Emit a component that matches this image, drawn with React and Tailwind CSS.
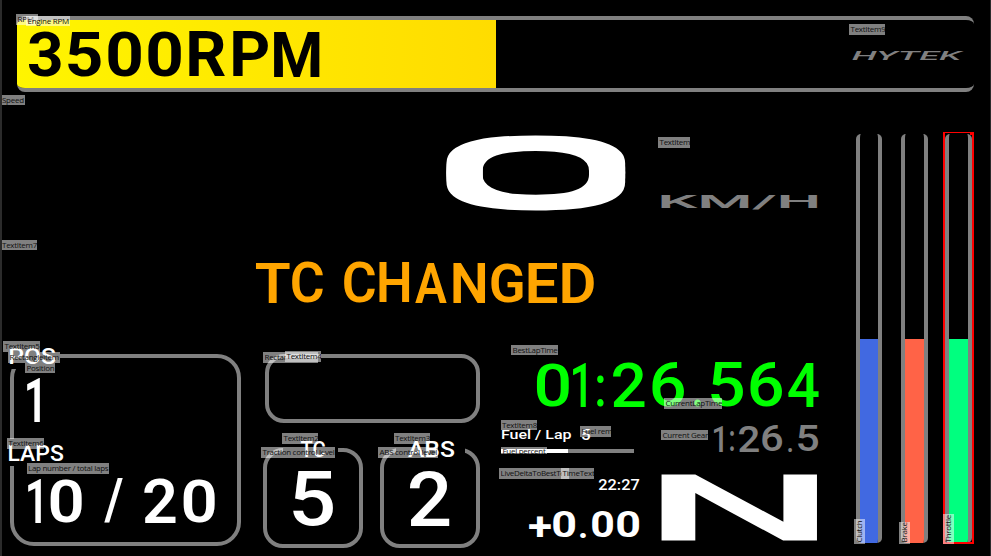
import React from "react";

const ctx = document.createElement("canvas").getContext("2d");

// Stretches one line of text so that its ink fills the box given by w and h.
// `thicken` adds weight to the horizontal strokes, in hundredths of an em.
function Fit({ children, w, h, weight = 500, italic = false, thicken = 0, className = "" }) {
  ctx.font = `${italic ? "italic " : ""}${weight} 100px Roboto, sans-serif`;
  const m = ctx.measureText(children);
  const left = m.actualBoundingBoxLeft;
  const inkW = left + m.actualBoundingBoxRight;
  const ascent = m.actualBoundingBoxAscent + thicken;
  const inkH = ascent + m.actualBoundingBoxDescent + thicken;
  const base = (m.fontBoundingBoxAscent - m.fontBoundingBoxDescent) / 2;
  return (
    <span className={`block shrink-0 ${className}`} style={{ width: w, height: h }}>
      <span
        className="block w-max origin-top-left whitespace-pre"
        style={{
          font: ctx.font,
          lineHeight: 0,
          textShadow: thicken ? `0 ${thicken}px currentColor, 0 -${thicken}px currentColor` : undefined,
          transform: `scale(${w / inkW}, ${h / inkH}) translate(${left}px, ${ascent - base}px)`,
        }}
      >
        {children}
      </span>
    </span>
  );
}

// A run of separately fitted glyphs: [text, width, gap before it, own height].
function Words({ parts, h, weight, className = "" }) {
  return (
    <div className={`flex items-end ${className}`}>
      {parts.map(([text, w, gap, height], i) => (
        <div key={i} className="shrink-0" style={{ marginLeft: gap }}>
          <Fit w={w} h={height || h} weight={weight}>{text}</Fit>
        </div>
      ))}
    </div>
  );
}

function Tag({ className, children }) {
  return (
    <span
      className={`absolute flex h-[10.5px] items-center overflow-hidden whitespace-nowrap bg-white/50 pl-[1.5px] font-['Open_Sans',sans-serif] text-[8px] leading-none tracking-[-0.28px] text-[#101010] ${className}`}
    >
      {children}
    </span>
  );
}

function Pedal({ fill, className = "" }) {
  return (
    <div className={`flex h-[409px] flex-col justify-end overflow-hidden rounded-[5px] border-x-4 border-[#808080] ${className}`}>
      <div className={`h-[204.5px] ${fill}`} />
    </div>
  );
}

export default function App() {
  return (
    <div className="relative h-[556px] w-[991px] overflow-hidden bg-black pt-4 text-white shadow-[inset_2px_0_#2b2b2b,inset_-1px_0_#2b2b2b]">
      <header className="ml-[17px] flex h-[76px] w-[957px] overflow-hidden rounded-[8px] border-y-4 border-[#808080]">
        <div className="w-[479px] bg-linear-to-r from-[#fff500] to-[#ffdc00] pl-[12px] pt-[11px] text-black">
          <Words
            h={45}
            weight={700}
            parts={[["3", 32, 0], ["5", 33, 7], ["0", 33, 7], ["0", 33, 7], ["R", 36, 8], ["P", 35, 8], ["M", 46, 6, 46]]}
          />
        </div>
        <div className="ml-[356px] mt-[31px] text-[#808080]">
          <Fit w={112} h={9} weight={500} italic>HYTEK</Fit>
        </div>
      </header>

      <div className="flex h-[464px]">
        <main className="w-[856px] shrink-0">
          <div className="flex gap-[34px] pl-[444px] pt-[43px]">
            <Fit w={183} h={76} weight={400} thicken={5}>0</Fit>
            <div className="pt-[59px] text-[#808080]">
              <Fit w={156} h={15} weight={600}>KM/H</Fit>
            </div>
          </div>

          <Words
            className="pl-[256px] pt-[52px] text-[#ffa500]"
            h={40}
            weight={600}
            parts={[["T", 34, 0], ["C", 31, 2], ["C", 31, 21], ["H", 30, 4], ["A", 32, 6], ["N", 32, 6], ["G", 32, 6], ["E", 29, 5], ["D", 32, 5]]}
          />

          <div className="flex h-[253px] items-start pl-[10px] pt-[43px]">
            <section className="mt-[8px] flex h-[192px] w-[231px] shrink-0 flex-col rounded-[24px] border-4 border-[#808080]">
              <div className="-ml-[6px] -mt-[12px] h-[23px] w-[52px] shrink-0 bg-black pl-[2px] pt-[2px]">
                <Fit w={45} h={16} weight={500}>POS</Fit>
              </div>
              <Fit className="ml-[13px] mt-[9px]" w={13} h={44} weight={600}>1</Fit>
              <div className="-ml-[6px] mt-[17px] h-[27px] w-[57px] shrink-0 bg-black pl-px pt-[6px]">
                <Fit w={54} h={16} weight={500}>LAPS</Fit>
              </div>
              <Words
                className="pl-[14px] pt-[13px]"
                h={44}
                weight={600}
                parts={[["1", 13, 0], ["0", 32, 9], ["/", 19, 22], ["2", 32, 21], ["0", 32, 7]]}
              />
            </section>

            <section className="ml-[22px] flex w-[217px] shrink-0 flex-col gap-[25px] pt-[8px]">
              <div className="ml-[2px] h-[69px] rounded-[19px] border-4 border-[#808080]" />
              <div className="flex justify-between">
                <div className="h-[100px] w-[100px] rounded-[20px] border-4 border-[#808080]">
                  <div className="-mt-[11px] ml-[16px] h-[18px] w-[55px] bg-black pl-[17.5px]">
                    <Fit w={24} h={16} weight={500}>TC</Fit>
                  </div>
                  <Fit className="ml-[26px] mt-[12px]" w={40} h={55} weight={500}>5</Fit>
                </div>
                <div className="h-[100px] w-[100px] rounded-[20px] border-4 border-[#808080]">
                  <div className="-mt-[11px] ml-[11.5px] h-[18px] w-[69px] bg-black pl-[12px]">
                    <Fit w={46} h={16} weight={500}>ABS</Fit>
                  </div>
                  <Fit className="ml-[26px] mt-[12px]" w={40} h={55} weight={500}>2</Fit>
                </div>
              </div>
            </section>

            <section className="ml-[19px] w-[322px] shrink-0 pt-[17px]">
              <Words
                className="pl-[38px] text-[#00ff00]"
                h={44}
                weight={500}
                parts={[["0", 32, 0], ["1", 13, 4], [":", 7, 11, 32], ["2", 32, 9], ["6", 32, 7], [".", 7, 10, 7], ["5", 32, 10], ["6", 32, 7], ["4", 31, 6]]}
              />
              <div className="flex">
                <div className="w-[147px] shrink-0 pt-[22px]">
                  <div className="flex gap-[11px] pl-[3px]">
                    <Fit w={69} h={13} weight={500}>Fuel / Lap</Fit>
                    <Fit className="mt-px" w={8} h={10} weight={500}>5</Fit>
                  </div>
                  <div className="ml-[2px] mt-[7px] h-[4px] w-[133px] bg-[#808080]">
                    <div className="h-full w-1/2 bg-white" />
                  </div>
                  <div className="flex w-[140px] flex-col items-end gap-[20px] pt-[26px]">
                    <Fit w={40} h={11} weight={500}>22:27</Fit>
                    <Words
                      h={28}
                      weight={700}
                      parts={[["+", 22, 0, 21], ["0", 22, 2], [".", 6, 5, 5], ["0", 21, 6], ["0", 22, 4]]}
                    />
                  </div>
                </div>
                <div className="flex w-[172px] shrink-0 flex-col items-end gap-[22px] pt-[18px]">
                  <Words
                    className="text-[#808080]"
                    h={27}
                    weight={500}
                    parts={[["1", 9, 0], [":", 4, 7, 20], ["2", 20, 5], ["6", 20, 3], [".", 4, 6, 4], ["5", 20, 6]]}
                  />
                  <Fit w={157} h={67} weight={500}>N</Fit>
                </div>
              </div>
            </section>
          </div>
        </main>

        <aside className="flex pt-[42px]">
          <Pedal className="w-[26px]" fill="bg-[#4169e1]" />
          <Pedal className="ml-[19px] w-[27px]" fill="bg-[#ff6347]" />
          <Pedal className="ml-[17px] w-[27px]" fill="bg-[#00ff7f]" />
        </aside>
      </div>

      <div className="absolute left-[943px] top-[132px] h-[412px] w-[31px] border-2 border-t-[1.5px] border-[#ff0000]">
        <span className="absolute -right-[1px] -top-[1px] h-[3px] w-[3px] bg-[#ff0000]" />
      </div>

      <Tag className="left-[16px] top-[14px] w-[22px]">RPM</Tag>
      <Tag className="left-[26px] top-[15.5px] w-[44px]">Engine RPM</Tag>
      <Tag className="left-[2px] top-[94.5px] w-[23px] !pl-0">Speed</Tag>
      <Tag className="left-[849px] top-[24px] w-[36px]">TextItem9</Tag>
      <Tag className="left-[658px] top-[137px] w-[32px]">TextItem</Tag>
      <Tag className="left-[2px] top-[239.5px] w-[34.5px] !pl-0">TextItem7</Tag>
      <Tag className="left-[3px] top-[341px] w-[36.5px]">TextItem5</Tag>
      <Tag className="left-[8px] top-[352px] w-[51.5px]">Rectangleitem</Tag>
      <Tag className="left-[25px] top-[362.5px] w-[30px]">Position</Tag>
      <Tag className="left-[7px] top-[438px] w-[36.5px]">TextItem6</Tag>
      <Tag className="left-[26.5px] top-[463px] w-[82.5px]">Lap number / total laps</Tag>
      <Tag className="left-[263px] top-[352px] w-[55px]"><span className="w-[21px] overflow-hidden">Rectangleitem</span></Tag>
      <Tag className="left-[285px] top-[351px] w-[36px]">TextItem4</Tag>
      <Tag className="left-[282px] top-[433px] w-[36px]">TextItem2</Tag>
      <Tag className="left-[261px] top-[447px] w-[74px]">Traction control level</Tag>
      <Tag className="left-[393.5px] top-[433px] w-[36px]">TextItem3</Tag>
      <Tag className="left-[378px] top-[447px] w-[60px]">ABS control level</Tag>
      <Tag className="left-[511px] top-[344.5px] w-[47px]">BestLapTime</Tag>
      <Tag className="left-[664px] top-[398px] w-[58px]">CurrentLapTime</Tag>
      <Tag className="left-[500.5px] top-[419.5px] w-[36.5px]">TextItem8</Tag>
      <Tag className="left-[580px] top-[426px] w-[31px]">Fuel rem</Tag>
      <Tag className="left-[661px] top-[429.5px] w-[47px]">Current Gear</Tag>
      <Tag className="left-[501px] top-[447px] !h-[7px] w-[45.5px] !items-start">Fuel percent</Tag>
      <Tag className="left-[499px] top-[468px] w-[70px]"><span className="w-[61px] overflow-hidden">LiveDeltaToBestText</span></Tag>
      <Tag className="left-[561px] top-[468px] w-[33px]">TimeText</Tag>
      <Tag className="left-[854px] top-[544px] w-[25px] origin-top-left -rotate-90">Clutch</Tag>
      <Tag className="left-[899px] top-[544px] w-[22px] origin-top-left -rotate-90">Brake</Tag>
      <Tag className="left-[943px] top-[544px] w-[30px] origin-top-left -rotate-90">Throttle</Tag>
    </div>
  );
}
